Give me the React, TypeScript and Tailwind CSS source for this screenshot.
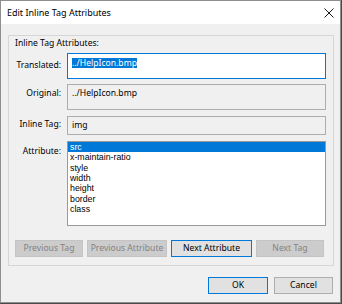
import React from "react";

const font = { fontFamily: '"Noto Sans", "Open Sans", sans-serif' };

const attributes = ["src", "x-maintain-ratio", "style", "width", "height", "border", "class"];

function Field({ label, children, labelPad }: { label: string; children: React.ReactNode; labelPad: string }) {
    return (
        <div className="flex">
            <div className={`w-[52px] shrink-0 text-right leading-[11px] text-black ${labelPad}`}>{label}</div>
            <div className="ml-[6px] w-[259px]">{children}</div>
        </div>
    );
}

export default function App() {
    return (
        <div className="w-[342px] h-[304px] bg-[#4a4a4a] text-[8.6px]" style={font}>
            <div className="w-[341px] h-[303px] border border-[#8e8e8e] bg-[#f0f0f0] flex flex-col">
                {/* title bar */}
                <div className="h-[23px] bg-white flex items-center justify-between pl-[6px] pr-[5px]">
                    <span className="text-[9px] text-black">Edit Inline Tag Attributes</span>
                    <svg width="10" height="10" viewBox="0 0 10 10" className="mr-[1px]">
                        <path d="M0.5 0.5 L9.5 9.5 M9.5 0.5 L0.5 9.5" stroke="#1a1a1a" strokeWidth="1" />
                    </svg>
                </div>

                {/* body */}
                <div className="pt-[11px] pl-[7px] pr-[6px]">
                    <div className="w-[326px] border border-[#d6d6d6] px-[6px] pb-[8px]">
                        <div className="mt-[1px] h-[12px] leading-[12px] text-black">Inline Tag Attributes:</div>

                        <div className="mt-[4px] -ml-[6px]">
                            <Field label="Translated:" labelPad="pt-[7px]">
                                <div className="h-[26px] bg-white border border-[#0078d7] pt-[3px] pl-[4px]">
                                    <span className="bg-[#0078d7] text-white leading-[10px] inline-block">../HelpIcon.bmp</span>
                                </div>
                            </Field>
                        </div>

                        <div className="mt-[5px] -ml-[6px]">
                            <Field label="Original:" labelPad="pt-[4px]">
                                <div className="h-[26px] bg-[#f0f0f0] border border-[#adadad] pt-[3px] pl-[4px] leading-[11px] text-black">
                                    ../HelpIcon.bmp
                                </div>
                            </Field>
                        </div>

                        <div className="mt-[6px] -ml-[6px]">
                            <Field label="Inline Tag:" labelPad="pt-[3px]">
                                <div className="h-[19px] bg-[#f0f0f0] border border-[#adadad] pl-[4px] flex items-center text-black">
                                    img
                                </div>
                            </Field>
                        </div>

                        <div className="mt-[6px] -ml-[6px]">
                            <Field label="Attribute:" labelPad="pt-[5px]">
                                <div className="h-[85px] bg-white border border-[#9a9a9a] overflow-hidden font-['Liberation_Sans',sans-serif] text-[8.8px]">
                                    {attributes.map((a, i) => (
                                        <div
                                            key={a}
                                            className={
                                                i === 0
                                                    ? "h-[10.33px] leading-[10.33px] pl-[2px] bg-[#0078d7] text-white"
                                                    : "h-[10.33px] leading-[10.33px] pl-[2px] text-black"
                                            }
                                        >
                                            {a}
                                        </div>
                                    ))}
                                </div>
                            </Field>
                        </div>

                        <div className="mt-[14px] flex gap-[4px]">
                            <button className="w-[68px] h-[17px] bg-[#cccccc] border border-[#c4c4c4] text-[#838383] leading-none">Previous Tag</button>
                            <button className="w-[80px] h-[17px] bg-[#cccccc] border border-[#c4c4c4] text-[#838383] leading-none">Previous Attribute</button>
                            <button className="w-[81px] h-[17px] bg-[#e1e1e1] border border-[#0078d7] text-black leading-none">Next Attribute</button>
                            <button className="w-[68px] h-[17px] bg-[#cccccc] border border-[#c4c4c4] text-[#838383] leading-none">Next Tag</button>
                        </div>
                    </div>

                    <div className="mt-[11px] flex justify-end gap-[6px] pr-[1px]">
                        <button className="w-[60px] h-[17px] bg-[#e1e1e1] border border-[#0078d7] text-black leading-none">OK</button>
                        <button className="w-[59px] h-[17px] bg-[#e1e1e1] border border-[#adadad] text-black leading-none">Cancel</button>
                    </div>
                </div>
            </div>
        </div>
    );
}
